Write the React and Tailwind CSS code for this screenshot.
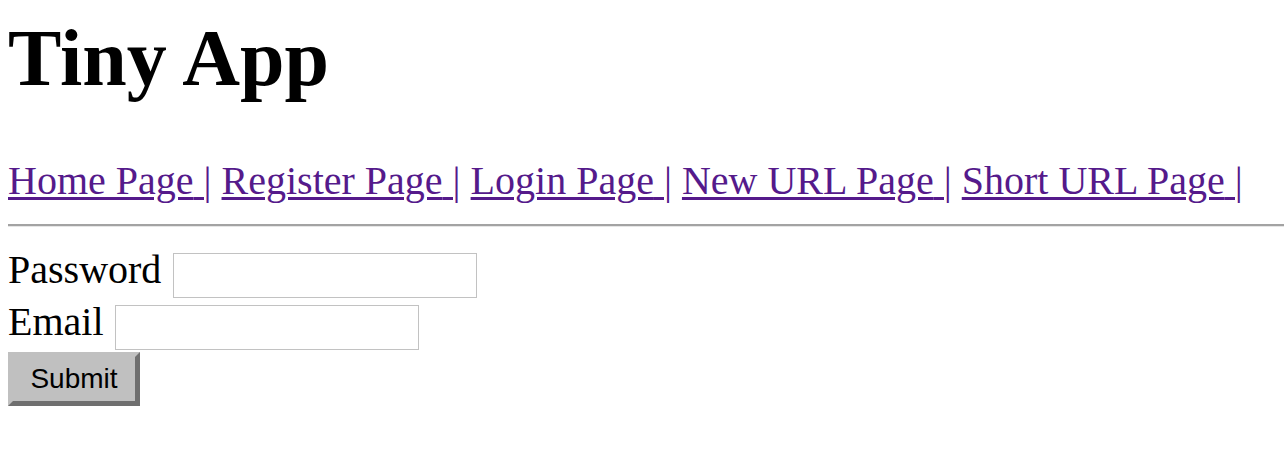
const links = ["Home Page", "Register Page", "Login Page", "New URL Page", "Short URL Page"];

const App = () => {
  return (
    <div className="min-h-[452px] bg-white pl-[8px] text-black [font-family:'Liberation_Serif','Times_New_Roman',serif]">
      <h1 className="mt-[12px] text-[80px] font-bold leading-[92px]">Tiny App</h1>

      <nav className="mt-[54px] whitespace-nowrap text-[40px] leading-[46px]">
        {links.map((label, i) => (
          <span key={label}>
            <a
              href="#"
              className="text-[#551a8b] underline decoration-[3px] underline-offset-[3px]"
            >
              {label} |
            </a>
            {i < links.length - 1 ? " " : null}
          </span>
        ))}
      </nav>

      <div className="mt-[20px] h-[3px] border-t-2 border-b border-t-[#a3a3a3] border-b-[#e6e6e6]" />

      <form className="mt-[26px]">
        <div className="flex items-start gap-[12px]">
          <label className="text-[40px] leading-[33px]">Password</label>
          <input type="password" className="h-[45px] w-[304px] border border-[#c2c2c2] bg-white outline-none" />
        </div>
        <div className="mt-[7px] flex items-start gap-[11px]">
          <label className="text-[40px] leading-[33px]">Email</label>
          <input type="text" className="h-[45px] w-[304px] border border-[#c2c2c2] bg-white outline-none" />
        </div>
        <button
          type="button"
          className="mt-[2px] flex h-[54px] w-[132px] items-center justify-center border-[5px] border-t-[#c0c0c0] border-l-[#c0c0c0] border-r-[#6f6f6f] border-b-[#6f6f6f] bg-[#c0c0c0] text-[28px] leading-none text-black [font-family:'Liberation_Sans',Arial,sans-serif]"
        >
          Submit
        </button>
      </form>
    </div>
  );
};

export default App;
